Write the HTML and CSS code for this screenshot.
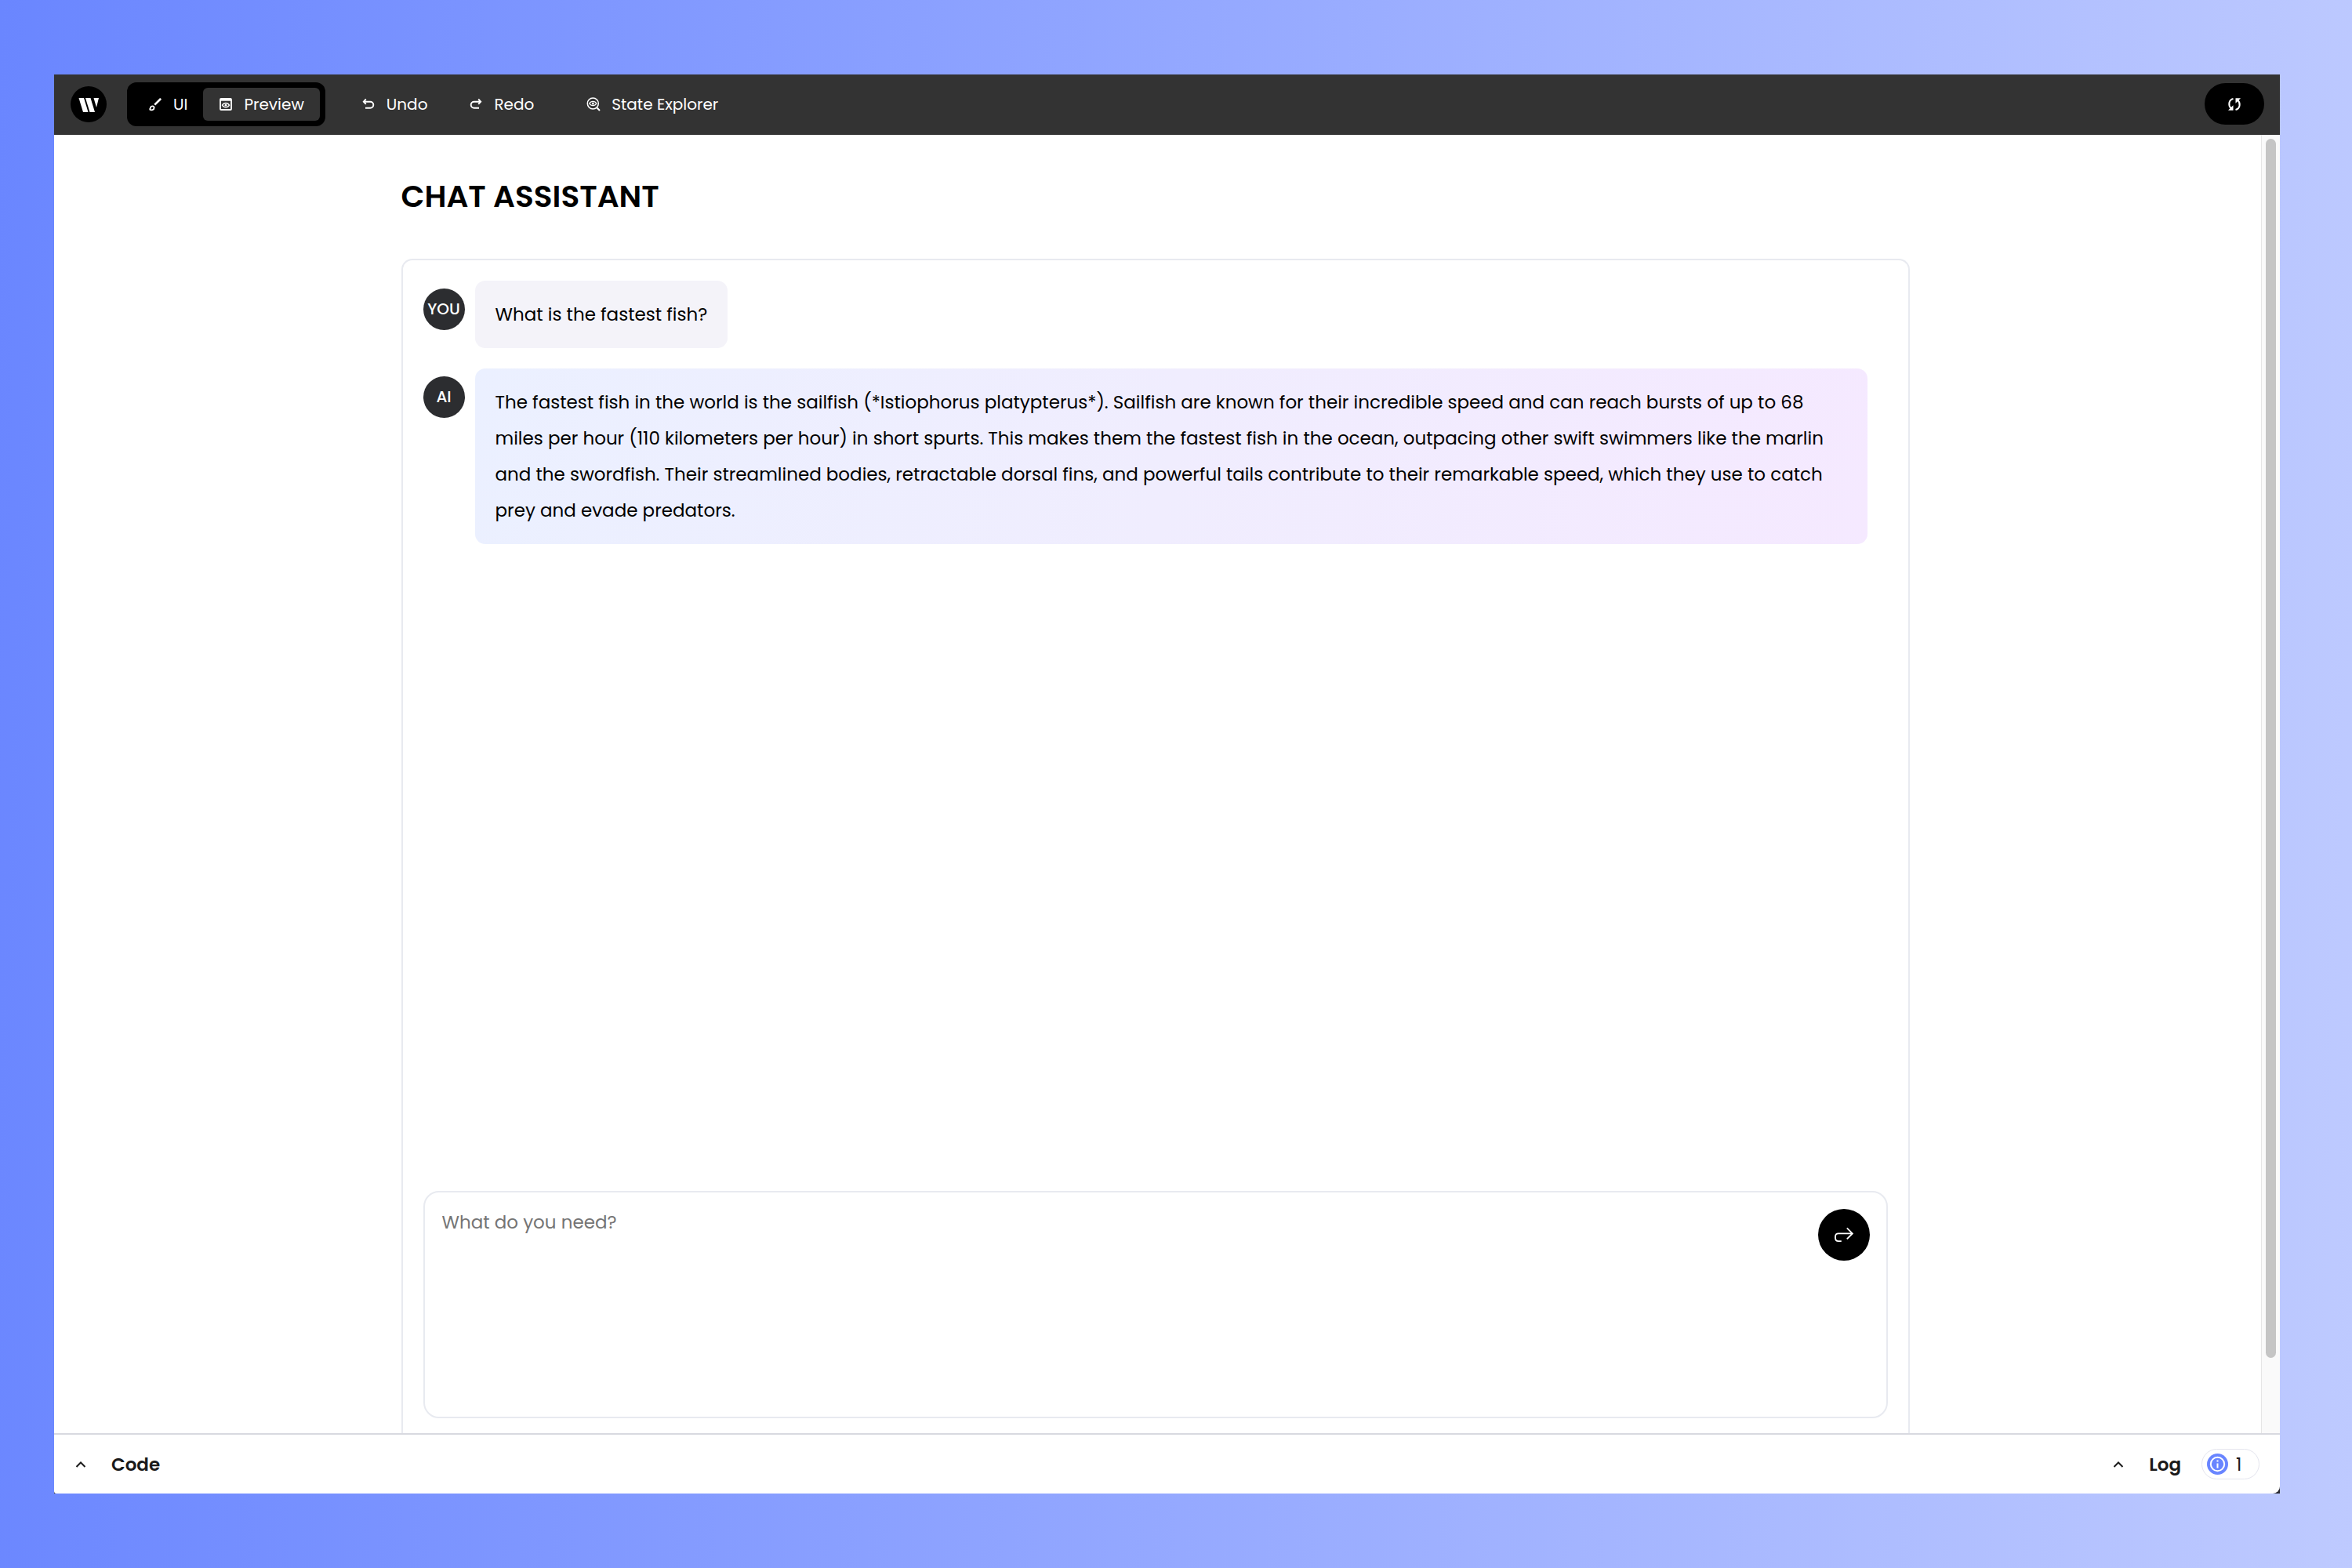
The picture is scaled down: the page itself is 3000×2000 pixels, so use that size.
FILE: index.html
```html
<!DOCTYPE html>
<html lang="en">
<head>
<meta charset="utf-8">
<title>Chat Assistant</title>
<link rel="stylesheet" href="styles.css">
</head>
<body>
<div class="window">
  <header class="topbar">
    <a class="logo" href="#" aria-label="Home">
      <svg viewBox="0 0 46 46"><g fill="#fff"><path d="M10.500 15h6.500l5.500 18h-6.500z"/><path d="M19 15h6.500l5.500 18h-6.500z"/><path d="M29.500 15h6.500l-3 12z"/></g></svg>
    </a>
    <nav class="modes">
      <button class="mode mode-ui" type="button">
        <svg class="icon" viewBox="0 0 18 18"><path d="M16 1.500c.9.500 1 1.400.4 2.100l-7.200 7-1.900-1.900 7-7c.5-.5 1.200-.6 1.700-.2z" fill="#fff"/><path d="M1.500 15.500c1.300-.3 1.300-1.200 1.500-2.400.5-2.500 4.600-2.500 4.600.5 0 2.700-3.600 3.400-5.800 1.900z" fill="none" stroke="#fff" stroke-width="1.800"/></svg>
        UI
      </button>
      <button class="mode mode-active" type="button">
        <svg class="icon" viewBox="0 0 18 18" fill="none" stroke="#fff"><rect x="2" y="2" width="14" height="14" rx="1" stroke-width="1.800"/><path d="M2 3.300h14" stroke-width="2.800"/><path d="M4.500 10.200c2-3.600 7-3.600 9 0-2 3.600-7 3.600-9 0z" stroke-width="1.400"/><circle cx="9" cy="10.200" r="1.400" fill="#fff" stroke="none"/></svg>
        Preview
      </button>
    </nav>
    <div class="actions">
      <button class="action" type="button">
        <svg class="icon" viewBox="0 0 18 18" fill="none" stroke="#fff" stroke-width="1.900"><path d="M5.800 2.500L2.800 5.700l3 3.200M3 5.700h8.300a3.900 3.900 0 0 1 0 8H5"/></svg>
        Undo
      </button>
      <button class="action" type="button">
        <svg class="icon" viewBox="0 0 18 18" fill="none" stroke="#fff" stroke-width="1.900"><path d="M12.200 2.500l3 3.200-3 3.200M15 5.700H6.700a3.900 3.900 0 0 0 0 8H13"/></svg>
        Redo
      </button>
      <button class="action action-state" type="button">
        <svg class="icon" viewBox="0 0 18 18" fill="none" stroke="#fff"><circle cx="8.300" cy="8" r="7" stroke-width="1.500"/><path d="M13 13l4 4" stroke-width="2"/><path d="M3.800 8c2-3.500 7-3.500 9 0-2 3.500-7 3.500-9 0z" stroke-width="1.400"/><circle cx="8.300" cy="8" r="1.500" fill="#fff" stroke="none"/></svg>
        State Explorer
      </button>
    </div>
    <button class="refresh" type="button" aria-label="Refresh">
      <svg class="icon" viewBox="0 0 18 18"><g fill="none" stroke="#fff" stroke-width="2"><path d="M7.500 2C1.500 3.500 1 10.500 4.500 14"/><path d="M10.500 16c6-1.500 6.500-8.500 3-12"/></g><path d="M1 16.800h6.500v-6.500zM17 1.200h-6.500v6.500z" fill="#fff"/></svg>
    </button>
  </header>

  <main class="stage">
    <div class="page">
      <h1 class="title">CHAT ASSISTANT</h1>
      <section class="chat">
        <div class="messages">
          <article class="message">
            <span class="avatar">YOU</span>
            <p class="bubble">What is the fastest fish?</p>
          </article>
          <article class="message">
            <span class="avatar">AI</span>
            <p class="bubble bubble-ai">The fastest fish in the world is the sailfish (*Istiophorus platypterus*). Sailfish are known for their incredible speed and can reach bursts of up to 68 miles per hour (110 kilometers per hour) in short spurts. This makes them the fastest fish in the ocean, outpacing other swift swimmers like the marlin and the swordfish. Their streamlined bodies, retractable dorsal fins, and powerful tails contribute to their remarkable speed, which they use to catch prey and evade predators.</p>
          </article>
        </div>
        <form class="composer">
          <textarea class="prompt" aria-label="Message" placeholder="What do you need?"></textarea>
          <button class="send" type="button" aria-label="Send">
            <svg class="send-icon" viewBox="0 0 24 24" fill="none" stroke="#fff" stroke-width="1.700"><path d="M15.500 4l6.500 6.500-6.500 6.500M22 10.500H5.500C3 10.500 1.800 11.800 1.800 14.500v1c0 2.500 1.200 4 3.700 4H9"/></svg>
          </button>
        </form>
      </section>
    </div>
    <div class="scrollbar"><div class="thumb"></div></div>
  </main>

  <footer class="panels">
    <button class="panel" type="button">
      <svg class="chevron" viewBox="0 0 14 14" fill="none" stroke="#1a1a1a" stroke-width="2"><path d="M1.500 10L7 4.500l5.500 5.500"/></svg>
      Code
    </button>
    <div class="log">
      <button class="panel" type="button">
        <svg class="chevron" viewBox="0 0 14 14" fill="none" stroke="#1a1a1a" stroke-width="2"><path d="M1.500 10L7 4.500l5.500 5.500"/></svg>
        Log
      </button>
      <span class="count">
        <svg class="info" viewBox="0 0 27 27"><circle cx="13.500" cy="13.500" r="13.500" fill="#6985ff"/><circle cx="13.500" cy="13.500" r="8.700" fill="none" stroke="#fff" stroke-width="2"/><path d="M12.500 12.500h2v6h-2zM12.500 8.500h2v2h-2z" fill="#fff"/></svg>
        1
      </span>
    </div>
  </footer>
</div>
</body>
</html>
```
FILE: styles.css
```css
* { box-sizing: border-box; }

body {
  margin: 0;
  min-height: 100vh;
  display: flex;
  padding: 95px 92px 95px 69px;
  background: linear-gradient(92deg, #6a86ff, #becaff);
  font-family: "Poppins", "Inter", sans-serif;
  font-size: 23px;
  color: #000;
}

button {
  display: flex;
  align-items: center;
  border: 0;
  padding: 0;
  background: none;
  color: inherit;
  font: inherit;
}

.window {
  flex: 1;
  display: flex;
  flex-direction: column;
  background: #2b2b33;
}

.topbar {
  display: flex;
  align-items: center;
  height: 77px;
  padding: 0 20px 2px 21px;
  background: #333;
  color: #fff;
  font-size: 20px;
}

.icon { width: 18px; height: 18px; }

.logo {
  width: 46px;
  height: 46px;
  border-radius: 50%;
  background: #000;
}

.modes {
  display: flex;
  height: 56px;
  margin-left: 26px;
  padding: 7px;
  border-radius: 12px;
  background: #000;
}

.mode { gap: 14px; border-radius: 6px; padding: 0 20px; }
.mode-active { background: #333; }

.actions { display: flex; margin-left: 46px; gap: 53px; }
.action { gap: 14px; }
.action-state { margin-left: 14px; }

.refresh {
  justify-content: center;
  width: 76px;
  height: 53px;
  margin-left: auto;
  border-radius: 27px;
  background: #000;
}

.stage { flex: 1; display: flex; background: #fff; }

.page {
  flex: 1;
  display: flex;
  flex-direction: column;
  align-items: center;
  padding: 50px 24px 0 18px;
}

.title,
.chat {
  width: 100%;
  max-width: 1924px;
}

.title {
  margin: 0;
  font-size: 39px;
  font-weight: 600;
  line-height: 58px;
}

.chat {
  flex: 1;
  display: flex;
  flex-direction: column;
  margin-top: 50px;
  padding: 26px 26px 19px;
  border: 2px solid #e8eaf0;
  border-bottom: 0;
  border-radius: 14px 14px 0 0;
}

.messages {
  flex: 1;
  display: flex;
  flex-direction: column;
  gap: 26px;
  padding-right: 26px;
}

.message { display: flex; align-items: flex-start; gap: 13px; }

.avatar {
  flex: none;
  width: 53px;
  height: 53px;
  margin-top: 10px;
  border-radius: 50%;
  background: #2c2d30;
  color: #fff;
  font-size: 20px;
  font-weight: 500;
  line-height: 53px;
  text-align: center;
}

.bubble {
  margin: 0;
  padding: 20px 26px;
  border-radius: 13px;
  background: #f4f3f9;
  line-height: 46px;
}

.bubble-ai { background: linear-gradient(99deg, #ebf0ff, #f0edfe 50%, #f5e9ff); }

.composer {
  display: flex;
  align-items: flex-start;
  height: 290px;
  padding: 21px 21px 21px 22px;
  border: 2px solid #e8eaf0;
  border-radius: 20px;
}

.prompt {
  flex: 1;
  align-self: stretch;
  border: 0;
  padding: 0;
  background: none;
  resize: none;
  font: inherit;
  line-height: 34px;
}

.prompt::placeholder { color: #757575; }

.send {
  justify-content: center;
  width: 66px;
  height: 66px;
  border-radius: 50%;
  background: #000;
}

.send-icon { width: 26px; height: 26px; }

.scrollbar {
  width: 24px;
  padding: 5px;
  border-left: 1px solid #e6e6e6;
  background: #fafafa;
}

.thumb {
  width: 13px;
  height: 94.5%;
  border-radius: 7px;
  background: #c5c5c5;
}

.panels {
  display: flex;
  justify-content: space-between;
  align-items: center;
  height: 77px;
  padding: 0 26px 0 27px;
  border-top: 2px solid #d8d9e0;
  border-radius: 0 0 9px 3px;
  background: #fff;
  color: #1a1a1a;
}

.panel { gap: 32px; font-weight: 600; }
.chevron { width: 14px; height: 14px; }
.log { display: flex; align-items: center; gap: 26px; }

.count {
  display: flex;
  align-items: center;
  gap: 10px;
  width: 74px;
  height: 39px;
  padding-left: 6px;
  border: 1px solid #e4e5ee;
  border-radius: 20px;
}

.info { width: 27px; height: 27px; }
```
